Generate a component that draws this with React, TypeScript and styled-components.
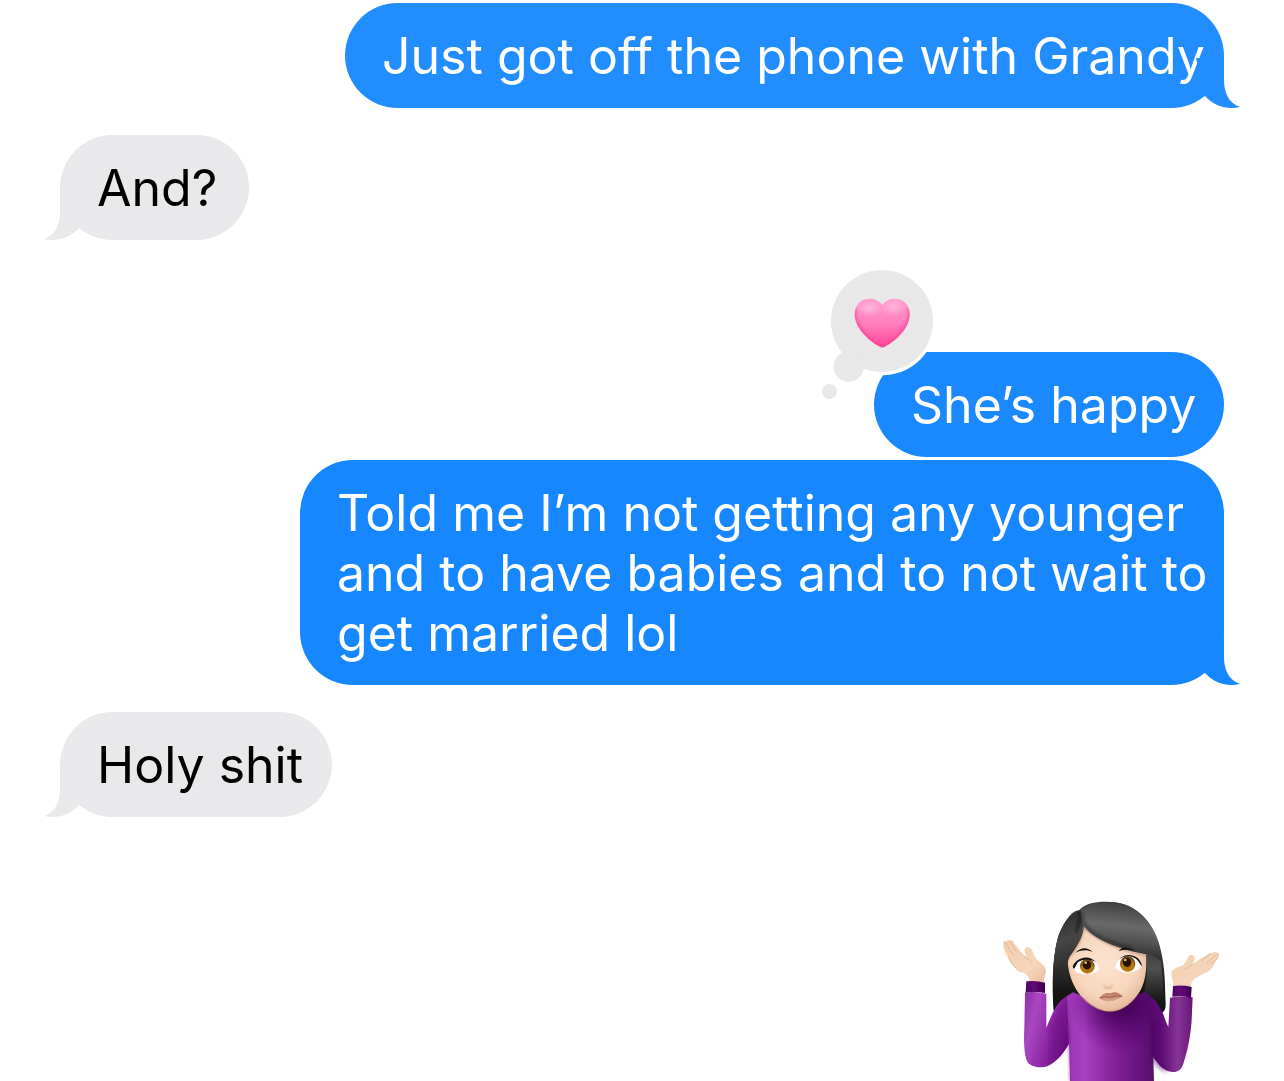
import styled, { createGlobalStyle, css } from "styled-components";

type Side = "sent" | "received";

type Line = { text: string; tracking?: number };

type Message = {
  id: number;
  side: Side;
  width: number;
  gap: number;
  lines: Line[];
  color: string;
  tail?: boolean;
  loved?: boolean;
};

const MESSAGES: Message[] = [
  { id: 1, side: "sent", width: 879, gap: 3, color: "#218dff", tail: true, lines: [{ text: "Just got off the phone with Grandy" }] },
  { id: 2, side: "received", width: 189, gap: 27, color: "#e9e9eb", tail: true, lines: [{ text: "And?" }] },
  { id: 3, side: "sent", width: 350, gap: 112, color: "#1a89ff", loved: true, lines: [{ text: "She’s happy" }] },
  {
    id: 4,
    side: "sent",
    width: 924,
    gap: 3,
    color: "#1687ff",
    tail: true,
    lines: [
      { text: "Told me I’m not getting any younger" },
      { text: "and to have babies and to not wait to" },
      { text: "get married lol" },
    ],
  },
  { id: 5, side: "received", width: 272, gap: 27, color: "#e9e9eb", tail: true, lines: [{ text: "Holy shit" }] },
];

const GlobalStyle = createGlobalStyle`
  body {
    margin: 0;
    background: #fff;
    overflow: hidden;
  }
`;

const Thread = styled.main`
  box-sizing: border-box;
  width: 1284px;
  height: 1081px;
  padding: 0 60px;
  display: flex;
  flex-direction: column;
  overflow: hidden;
  background: #fff;
  font-family: Inter, "Liberation Sans", sans-serif;
`;

const Bubble = styled.div<{ $side: Side; $width: number; $gap: number; $color: string }>`
  position: relative;
  box-sizing: border-box;
  flex-shrink: 0;
  width: ${({ $width }) => $width}px;
  margin-top: ${({ $gap }) => $gap}px;
  padding: 22.5px 37px;
  border-radius: 53px;
  background: ${({ $color }) => $color};
  ${({ $side }) =>
    $side === "sent"
      ? css`
          align-self: flex-end;
          color: #fff;
        `
      : css`
          align-self: flex-start;
          color: #000;
        `}
`;

const TextLine = styled.div<{ $tracking: number }>`
  width: max-content;
  font-size: 50px;
  line-height: 60px;
  white-space: nowrap;
  letter-spacing: ${({ $tracking }) => $tracking}px;
`;

const TailShape = styled.svg<{ $side: Side }>`
  position: absolute;
  bottom: 0;
  width: 60px;
  height: 60px;
  ${({ $side }) => ($side === "sent" ? "right: -20px;" : "left: -20px; transform: scaleX(-1);")}
`;

const Tapback = styled.svg`
  position: absolute;
  left: -58px;
  top: -86px;
  width: 124px;
  height: 140px;
`;

const Sticker = styled.svg`
  flex-shrink: 0;
  align-self: flex-end;
  width: 240px;
  height: 191px;
  margin: 73px -6px 0 0;
`;

function Tail({ side, color }: { side: Side; color: string }) {
  return (
    <TailShape $side={side} viewBox="0 0 60 60" fill={color}>
      <path d="M12 10H40V32C40 45 45 55 56 59C43 62 30 58 21 48Z" />
    </TailShape>
  );
}

function HeartTapback() {
  return (
    <Tapback viewBox="816 266 124 140">
      <defs>
        <linearGradient id="heartBase" x1="0" y1="0" x2="0" y2="1">
          <stop offset="0" stopColor="#ff9fd0" />
          <stop offset=".5" stopColor="#ff80bf" />
          <stop offset="1" stopColor="#ff3c91" />
        </linearGradient>
        <radialGradient id="heartGlow">
          <stop offset="0" stopColor="#ffb6da" />
          <stop offset="1" stopColor="#ffb6da" stopOpacity="0" />
        </radialGradient>
        <clipPath id="heartClip">
          <path d="M882.3 305C878.500 300 874 298.500 869 298.700C860 299 854.700 305.500 854.700 314C854.700 328 868 340 879.500 346.600Q882.300 348.400 885 346.600C897 340 909.700 328 909.700 314C909.700 305.500 904 299 895.500 298.700C890.500 298.500 886 300 882.300 305Z" />
        </clipPath>
        <filter id="heartSoft" x="-20%" y="-20%" width="140%" height="140%">
          <feGaussianBlur stdDeviation="1.8" />
        </filter>
      </defs>
      <circle cx="882" cy="321" r="54.300" fill="#fff" />
      <g fill="#e8e8e9">
        <circle cx="882" cy="321" r="51" />
        <circle cx="848.700" cy="366.500" r="15.200" />
        <circle cx="829.500" cy="391.500" r="7.600" />
      </g>
      <g clipPath="url(#heartClip)">
        <rect x="850" y="295" width="64" height="56" fill="url(#heartBase)" />
        <ellipse cx="869" cy="308" rx="13" ry="9" fill="url(#heartGlow)" />
        <ellipse cx="893" cy="307" rx="13" ry="9" fill="url(#heartGlow)" />
        <path
          d="M854 308C854 328 868 341 882.300 348C897 341 910 328 910 308"
          fill="none"
          stroke="#ff3f99"
          strokeWidth="3.500"
          opacity=".75"
          filter="url(#heartSoft)"
        />
      </g>
    </Tapback>
  );
}

function ShrugSticker() {
  return (
    <Sticker viewBox="0 0 720 573">
      <defs>
        <linearGradient id="hair" x1="0" y1="0" x2="0" y2="1">
          <stop offset="0" stopColor="#424242" />
          <stop offset=".25" stopColor="#505051" />
          <stop offset=".5" stopColor="#353535" />
          <stop offset=".8" stopColor="#161616" />
          <stop offset="1" stopColor="#111" />
        </linearGradient>
        <linearGradient id="fringe" x1=".55" y1="0" x2=".4" y2="1">
          <stop offset="0" stopColor="#3d3d3d" />
          <stop offset=".4" stopColor="#6a6a6b" />
          <stop offset=".65" stopColor="#505051" />
          <stop offset="1" stopColor="#202020" />
        </linearGradient>
        <linearGradient id="sideLock" x1="0" y1="0" x2=".15" y2="1">
          <stop offset="0" stopColor="#292929" />
          <stop offset=".45" stopColor="#464646" />
          <stop offset=".7" stopColor="#363636" />
          <stop offset="1" stopColor="#171717" stopOpacity="0" />
        </linearGradient>
        <radialGradient id="face" cx=".48" cy=".43" r=".62">
          <stop offset="0" stopColor="#fce3cf" />
          <stop offset=".6" stopColor="#f7d7be" />
          <stop offset=".85" stopColor="#e8bd9f" />
          <stop offset="1" stopColor="#c99471" />
        </radialGradient>
        <linearGradient id="skin" x1="0" y1="0" x2="1" y2="1">
          <stop offset="0" stopColor="#f3cfaf" />
          <stop offset=".65" stopColor="#f6d5bb" />
          <stop offset="1" stopColor="#edbe9e" />
        </linearGradient>
        <linearGradient id="torso" x1="0" y1="0" x2="1" y2="0">
          <stop offset="0" stopColor="#9a35b3" />
          <stop offset=".2" stopColor="#a840c1" />
          <stop offset=".55" stopColor="#842099" />
          <stop offset=".85" stopColor="#64127a" />
          <stop offset="1" stopColor="#571069" />
        </linearGradient>
        <radialGradient id="neckShade" gradientUnits="userSpaceOnUse" cx="390" cy="340" r="150">
          <stop offset="0" stopColor="#360047" stopOpacity=".95" />
          <stop offset=".35" stopColor="#43005a" stopOpacity=".7" />
          <stop offset="1" stopColor="#580070" stopOpacity="0" />
        </radialGradient>
        <linearGradient id="armLeft" x1="0" y1="0" x2="1" y2=".35">
          <stop offset="0" stopColor="#8f31a6" />
          <stop offset=".25" stopColor="#aa46c2" />
          <stop offset=".55" stopColor="#8e28a5" />
          <stop offset="1" stopColor="#4f0069" />
        </linearGradient>
        <linearGradient id="armRight" x1="0" y1="0" x2="1" y2="0">
          <stop offset="0" stopColor="#58086e" />
          <stop offset=".35" stopColor="#5d0b74" />
          <stop offset=".7" stopColor="#863496" />
          <stop offset="1" stopColor="#681677" />
        </linearGradient>
        <linearGradient id="cuff" x1="0" y1="0" x2="1" y2="0">
          <stop offset="0" stopColor="#4e0560" />
          <stop offset=".4" stopColor="#64097a" />
          <stop offset="1" stopColor="#3d0050" />
        </linearGradient>
        <radialGradient id="iris" cx=".5" cy=".65" r=".6">
          <stop offset="0" stopColor="#9c6800" />
          <stop offset=".6" stopColor="#bd8013" />
          <stop offset="1" stopColor="#684000" />
        </radialGradient>
        <linearGradient id="lips" x1="0" y1="0" x2="0" y2="1">
          <stop offset="0" stopColor="#b97961" />
          <stop offset=".5" stopColor="#ca927c" />
          <stop offset="1" stopColor="#dfa78f" />
        </linearGradient>
        <clipPath id="faceClip">
          <path d="M282 110C278 145 260 174 233 204C233 241 243 282 272 317C296 345 329 365 362 365C397 365 431 336 452 300C466 274 471 238 469 192C397 175 326 154 282 110Z" />
        </clipPath>
        <filter id="soft1" x="-30%" y="-30%" width="160%" height="160%">
          <feGaussianBlur stdDeviation="2.500" />
        </filter>
        <filter id="soft2" x="-30%" y="-30%" width="160%" height="160%">
          <feGaussianBlur stdDeviation="7" />
        </filter>
      </defs>

      {/* hair behind the head */}
      <path
        d="M268 60C285 40 318 34 352 35C405 35 450 62 478 102C511 150 520 204 524 263L527 345Q526 366 516 367L480 330L240 330L192 364C186 316 187 240 194 194C200 145 219 95 246 70Q257 61 268 60Z"
        fill="url(#hair)"
      />

      {/* hands */}
      <g fill="url(#skin)">
        <path d="M119 276C120 260 109 251 94 246C75 238 62 219 53 202C45 187 39 172 39 159Q41 149 49 155Q51 148 60 151Q68 149 73 161L101 194L112 201C103 189 101 178 107 173C116 167 125 176 129 187C133 202 141 211 152 218C166 228 171 239 166 253Q161 263 163 276Z" />
        <path d="M551 290C551 278 545 263 544 252C544 239 558 233 573 229C584 224 589 215 593 204C597 194 606 193 613 198C616 207 612 216 607 223L631 206L650 194Q661 187 665 190Q673 184 679 187Q688 187 687 193Q689 202 681 209C672 223 668 238 650 247L617 264Q602 273 602 292Z" />
      </g>
      <g fill="none" stroke="#d59d78" strokeWidth="2" strokeLinecap="round" opacity=".75">
        <path d="M48 158Q56 178 72 196" />
        <path d="M60 154L80 186" />
        <path d="M101 198Q119 207 126 220" />
        <path d="M55 202Q69 235 94 246" />
        <path d="M663 190L634 214" />
        <path d="M681 193L650 219" />
        <path d="M682 206L659 223" />
        <path d="M607 223Q597 232 585 237" />
      </g>

      {/* sweater */}
      <path
        d="M105 308Q135 303 169 311L169 413C181 384 192 358 208 333Q225 307 254 307L282 475L237 462C223 486 201 516 175 527C151 537 120 531 111 513C102 492 101 455 103 415Z"
        fill="url(#armLeft)"
      />
      <path
        d="M540 323Q573 316 608 322L605 390C602 436 593 484 579 524C569 552 540 550 524 538C509 530 500 514 490 503L460 305Q490 306 506 337C517 360 524 389 535 411Z"
        fill="url(#armRight)"
      />
      <path
        d="M240 575C240 538 238 502 237 460C234 405 233 358 230 310Q247 304 268 314L445 314Q466 302 485 318C496 365 494 455 490 503L492 575Z"
        fill="url(#torso)"
      />
      <path
        d="M230 310Q247 304 268 314L445 314Q466 302 485 318C496 365 494 455 490 503L492 575H240Z"
        fill="url(#neckShade)"
      />
      <path d="M178 412Q201 364 224 336L238 450Q215 492 181 507" fill="#6b0b81" opacity=".4" filter="url(#soft2)" />
      <path d="M489 390V503Q510 535 532 540" fill="none" stroke="#43005a" strokeWidth="13" opacity=".55" filter="url(#soft2)" />
      <path d="M233 395L237 460L240 573" fill="none" stroke="#7a188e" strokeWidth="4" opacity=".65" filter="url(#soft1)" />
      <path d="M109 274Q138 270 165 278V309Q136 304 107 308Z" fill="url(#cuff)" />
      <path d="M549 288Q578 284 605 291L603 323Q575 317 547 320Z" fill="url(#cuff)" />

      {/* face */}
      <g clipPath="url(#faceClip)">
        <rect x="225" y="100" width="250" height="270" fill="url(#face)" />
        <path d="M281 108C276 148 260 180 233 205M282 112Q348 174 470 196" fill="none" stroke="#9c6243" strokeWidth="6" opacity=".5" filter="url(#soft1)" />
      </g>
      <path d="M274 319Q327 370 365 365Q415 359 446 311" fill="none" stroke="#8e503d" strokeWidth="2" opacity=".7" />
      <path
        d="M272 61C307 36 370 27 417 48C478 76 514 147 514 213Q490 195 465 192C410 183 327 157 292 120Q275 99 272 61Z"
        fill="url(#fringe)"
      />
      <path d="M469 191Q489 195 513 213L525 347L518 367L500 335L463 303Q475 251 469 191Z" fill="url(#hair)" />
      <path
        d="M269 62C243 66 213 104 201 154C192 193 189 240 189 282L191 362Q205 330 246 309C236 282 230 251 233 227C232 202 251 180 267 151Q280 123 276 91Z"
        fill="url(#hair)"
      />
      <path
        d="M269 62C243 66 213 104 201 154C192 193 189 240 189 282Q210 250 233 205Q252 188 267 151Q280 123 276 91Z"
        fill="url(#sideLock)"
      />
      <path d="M270 63Q270 101 257 127" fill="none" stroke="#111" strokeWidth="7" opacity=".65" filter="url(#soft1)" />
      <path d="M277 68Q277 105 315 132Q360 159 425 174" fill="none" stroke="#242424" strokeWidth="7" opacity=".55" filter="url(#soft1)" />

      {/* brows */}
      <path d="M257 188C270 174 290 168 308 186C292 179 277 179 257 188Z" fill="#15100f" />
      <path d="M386 183Q398 167 415 175L438 181Q406 176 386 183Z" fill="#15100f" />

      {/* eyes */}
      <path d="M251 237C261 207 292 197 314 213Q326 225 327 240C311 254 269 261 251 237Z" fill="#fff" />
      <path d="M376 233C380 203 408 190 435 201Q449 210 455 231C434 251 397 255 376 233Z" fill="#fff" />
      <g>
        <circle cx="292" cy="229" r="22" fill="url(#iris)" />
        <circle cx="291" cy="225" r="13" fill="#251100" />
        <circle cx="287" cy="218" r="4" fill="#f5ddb5" opacity=".85" />
        <circle cx="413" cy="222" r="23" fill="url(#iris)" />
        <circle cx="411" cy="217" r="13" fill="#251100" />
        <circle cx="406" cy="210" r="4" fill="#f5ddb5" opacity=".85" />
      </g>
      <path d="M248 230Q255 209 281 203Q300 199 317 215Q285 201 264 216L252 237Z" fill="#14100d" />
      <path d="M386 208Q411 187 437 200Q451 206 457 230L450 222Q441 203 419 199Q401 198 386 208Z" fill="#14100d" />

      {/* nose and mouth */}
      <path d="M342 287Q349 299 354 293Q361 299 366 285" fill="none" stroke="#c98b69" strokeWidth="5" opacity=".65" filter="url(#soft1)" />
      <path d="M328 323C337 312 350 306 361 310C374 304 387 307 398 319Q391 324 383 327Q352 344 328 323Z" fill="url(#lips)" />
      <path d="M329 324Q344 318 361 322Q381 315 397 319" fill="none" stroke="#9d5b48" strokeWidth="3" />
    </Sticker>
  );
}

export default function App() {
  return (
    <>
      <GlobalStyle />
      <Thread>
        {MESSAGES.map((message) => (
          <Bubble
            key={message.id}
            $side={message.side}
            $width={message.width}
            $gap={message.gap}
            $color={message.color}
          >
            {message.tail && <Tail side={message.side} color={message.color} />}
            {message.lines.map((line) => (
              <TextLine key={line.text} $tracking={line.tracking ?? 0}>
                {line.text}
              </TextLine>
            ))}
            {message.loved && <HeartTapback />}
          </Bubble>
        ))}
        <ShrugSticker />
      </Thread>
    </>
  );
}
